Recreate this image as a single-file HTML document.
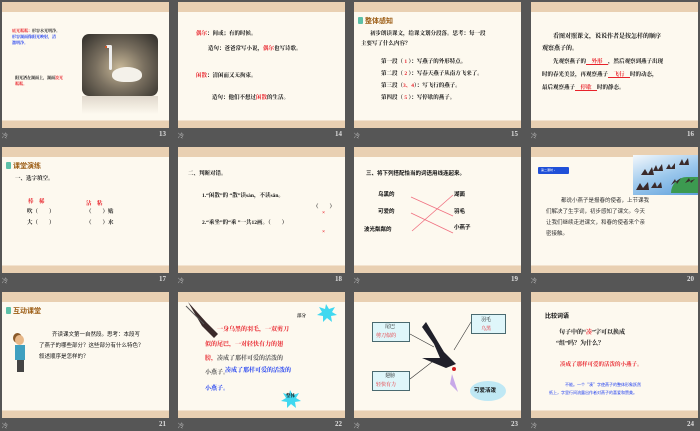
<!DOCTYPE html>
<html><head><meta charset="utf-8"><style>
*{margin:0;padding:0;box-sizing:border-box}
body{width:700px;height:431px;background:#565656;position:relative;overflow:hidden;font-family:"Liberation Sans","Noto Sans CJK SC",sans-serif}
.s{position:absolute;width:167px;height:126px;background:#fdf9ef;overflow:hidden}
.s:before{content:"";position:absolute;left:0;top:0;width:100%;height:10px;background:#e9d0b2}
.s:after{content:"";position:absolute;left:0;bottom:0;width:100%;height:7px;background:#e9d0b2;border-top:1px solid #f3e3cf}
.t{position:absolute;font-size:5.5px;line-height:1;white-space:nowrap;color:#111;font-family:"Liberation Serif","Noto Serif CJK SC",serif;font-weight:bold}
.r{color:#e8222a}.b{color:#1c3cf0}
.n{position:absolute;font-size:7px;color:#ddd;font-weight:bold;font-family:"Liberation Serif",serif}
.i{position:absolute;font-size:6px;color:#bbb}
.hd{position:absolute;font-size:7px;font-weight:bold;color:#9a5a10;white-space:nowrap;font-family:"Noto Sans CJK SC",sans-serif}
.ic{position:absolute;width:5px;height:7px;background:#5cc0a8;border-radius:1px}
</style></head><body>

<!-- row 1 -->
<div class="s" style="left:2px;top:2px">
 <div class="t r" style="left:10px;top:27px;font-size:4px">底光粼粼：<span style="color:#222">形容水光明净。</span></div>
 <div class="t b" style="left:10px;top:33px;font-size:4px">形容湖面像阳光映射，清</div>
 <div class="t b" style="left:10px;top:39px;font-size:4px">澈明净。</div>
 <div class="t" style="left:13px;top:74px;font-size:4px">阳光洒在湖面上，湖面<span class="r">波光</span></div>
 <div class="t r" style="left:13px;top:80px;font-size:4px">粼粼。</div>
 <div style="position:absolute;left:80px;top:32px;width:76px;height:62px;border-radius:7px;background:radial-gradient(ellipse at 50% 55%,#c8b898,#7a7060 45%,#2e2c28)"></div>
 <div style="position:absolute;left:110px;top:65px;width:30px;height:15px;border-radius:50% 50% 40% 40%;background:#f4f1ea"></div>
 <div style="position:absolute;left:107px;top:44px;width:3px;height:24px;background:#eee;border-radius:2px"></div>
 <div style="position:absolute;left:104px;top:43px;width:6px;height:3px;background:#eee;border-radius:2px"></div>
 <div style="position:absolute;left:103px;top:44px;width:2px;height:2px;background:#d05020"></div>
 <div style="position:absolute;left:80px;top:94px;width:76px;height:18px;background:linear-gradient(#e0d8cc,#fdf9ef)"></div>
</div>
<div class="i" style="left:2px;top:131px">冷</div><div class="n" style="left:159px;top:130px">13</div>

<div class="s" style="left:178px;top:2px">
 <div class="t" style="left:18px;top:30px"><span class="r">偶尔</span>：间或；有的时候。</div>
 <div class="t" style="left:30px;top:45px">造句：爸爸常写小说，<span class="r">偶尔</span>也写诗歌。</div>
 <div class="t" style="left:18px;top:72px"><span class="r">闲散</span>：清闲而又无拘束。</div>
 <div class="t" style="left:34px;top:94px">造句：他们不想过<span class="r">闲散</span>的生活。</div>
</div>
<div class="i" style="left:178px;top:131px">冷</div><div class="n" style="left:335px;top:130px">14</div>

<div class="s" style="left:354px;top:2px">
 <div class="ic" style="left:4px;top:15px"></div>
 <div class="hd" style="left:11px;top:14px">整体感知</div>
 <div class="t" style="left:16px;top:30px">初步朗读课文，给课文划分段落。思考：每一段</div>
 <div class="t" style="left:7px;top:40px">主要写了什么内容？</div>
 <div class="t" style="left:27px;top:58px">第一段（ <span class="r">1</span> ）：写燕子的外形特点。</div>
 <div class="t" style="left:27px;top:70px">第二段（ <span class="r">2</span> ）：写春天燕子从南方飞来了。</div>
 <div class="t" style="left:27px;top:82px">第三段（<span class="r">3、4</span>）：写飞行的燕子。</div>
 <div class="t" style="left:27px;top:94px">第四段（ <span class="r">5</span> ）：写停歇的燕子。</div>
</div>
<div class="i" style="left:354px;top:131px">冷</div><div class="n" style="left:511px;top:130px">15</div>

<div class="s" style="left:531px;top:2px">
 <div class="t" style="left:22px;top:32px;font-size:6px">看图对照课文，说说作者是按怎样的顺序</div>
 <div class="t" style="left:11px;top:44px;font-size:6px">观察燕子的。</div>
 <div class="t" style="left:22px;top:58px">先观察燕子的<span class="r" style="text-decoration:underline">　外形　</span>，然后观察到燕子出现</div>
 <div class="t" style="left:11px;top:71px">时的春光美景，再观察燕子<span class="r" style="text-decoration:underline">　飞行　</span>时的动态，</div>
 <div class="t" style="left:11px;top:84px">最后观察燕子<span class="r" style="text-decoration:underline">　停歇　</span>时的静态。</div>
</div>
<div class="i" style="left:531px;top:131px">冷</div><div class="n" style="left:687px;top:130px">16</div>

<!-- row 2 -->
<div class="s" style="left:2px;top:147px">
 <div class="ic" style="left:4px;top:15px"></div>
 <div class="hd" style="left:11px;top:14px">课堂演练</div>
 <div class="t" style="left:13px;top:30px">一、选字填空。</div>
 <div class="t r" style="left:26px;top:53px">棒　稀</div>
 <div class="t r" style="left:84px;top:55px">沾　粘</div>
 <div class="t" style="left:25px;top:63px">吹（　　）</div>
 <div class="t" style="left:84px;top:63px">（　　）贴</div>
 <div class="t" style="left:25px;top:74px">大（　　）</div>
 <div class="t" style="left:84px;top:74px">（　　）水</div>
</div>
<div class="i" style="left:2px;top:276px">冷</div><div class="n" style="left:159px;top:275px">17</div>

<div class="s" style="left:178px;top:147px">
 <div class="t" style="left:10px;top:25px">二、判断对错。</div>
 <div class="t" style="left:24px;top:47px">1.“闲散”的 “散”读sàn，不读sǎn。</div>
 <div class="t" style="left:135px;top:58px">（　　）</div>
 <div class="t r" style="left:144px;top:64px">×</div>
 <div class="t" style="left:24px;top:74px">2.“乘坐”的“乘 ”一共12画。（　　）</div>
 <div class="t r" style="left:144px;top:83px">×</div>
</div>
<div class="i" style="left:178px;top:276px">冷</div><div class="n" style="left:335px;top:275px">18</div>

<div class="s" style="left:354px;top:147px">
 <div class="t" style="left:12px;top:24px;font-family:'Noto Sans CJK SC',sans-serif;font-size:5.5px">三、将下列搭配恰当的词语用线连起来。</div>
 <div class="t" style="left:24px;top:45px;font-family:'Noto Sans CJK SC',sans-serif">乌黑的</div>
 <div class="t" style="left:24px;top:62px;font-family:'Noto Sans CJK SC',sans-serif">可爱的</div>
 <div class="t" style="left:10px;top:80px;font-family:'Noto Sans CJK SC',sans-serif">波光粼粼的</div>
 <div class="t" style="left:100px;top:45px;font-family:'Noto Sans CJK SC',sans-serif">湖面</div>
 <div class="t" style="left:100px;top:62px;font-family:'Noto Sans CJK SC',sans-serif">羽毛</div>
 <div class="t" style="left:100px;top:78px;font-family:'Noto Sans CJK SC',sans-serif">小燕子</div>
 <svg style="position:absolute;left:0;top:0" width="167" height="126"><g stroke="#f07080" stroke-width="0.8"><line x1="57" y1="50" x2="99" y2="69"/><line x1="57" y1="66" x2="99" y2="86"/><line x1="58" y1="84" x2="99" y2="48"/></g></svg>
</div>
<div class="i" style="left:354px;top:276px">冷</div><div class="n" style="left:511px;top:275px">19</div>

<div class="s" style="left:531px;top:147px">
 <div style="position:absolute;left:102px;top:8px;width:65px;height:40px;background:linear-gradient(160deg,#f4f8fc,#9cc8ec 50%,#5fa0dc)"></div>
 <div style="position:absolute;left:140px;top:30px;width:27px;height:16px;background:#3c9a50;border-radius:20px 0 0 0"></div>
 <svg style="position:absolute;left:100px;top:8px" width="67" height="40"><g fill="#3a2a2a"><path d="M10 20l4-6 3 5 4-7 2 8z"/><path d="M22 16l3-6 2 5 4-6 1 7z"/><path d="M35 14l3-5 2 4 4-5v6z"/><path d="M48 10l3-6 2 5 4-6 1 7z"/><path d="M5 35l4-7 3 5 5-6 1 8z"/><path d="M20 33l4-6 2 5 4-5 1 6z"/><path d="M40 30l4-6 2 5 4-6z"/><path d="M54 28l4-5 2 5 4-4z"/></g></svg>
 <div style="position:absolute;left:7px;top:20px;width:31px;height:7px;background:#2050d8;border-radius:1px;color:#fff;font-size:3px;line-height:7px;padding-left:3px">第二课时 ›</div>
 <div class="t" style="left:30px;top:51px;font-family:'Noto Sans CJK SC',sans-serif;font-weight:normal;color:#333">都说小燕子是报春的使者，上节课我</div>
 <div class="t" style="left:15px;top:62px;font-family:'Noto Sans CJK SC',sans-serif;font-weight:normal;color:#333">们解决了生字词，初步感知了课文。今天</div>
 <div class="t" style="left:15px;top:73px;font-family:'Noto Sans CJK SC',sans-serif;font-weight:normal;color:#333">让我们继续走进课文，和春的使者来个亲</div>
 <div class="t" style="left:15px;top:84px;font-family:'Noto Sans CJK SC',sans-serif;font-weight:normal;color:#333">密接触。</div>
</div>
<div class="i" style="left:531px;top:276px">冷</div><div class="n" style="left:687px;top:275px">20</div>

<!-- row 3 -->
<div class="s" style="left:2px;top:292px">
 <div class="ic" style="left:4px;top:15px"></div>
 <div class="hd" style="left:11px;top:14px">互动课堂</div>
 <div style="position:absolute;left:13px;top:43px;width:9px;height:10px;border-radius:50%;background:#e8b888;box-shadow:-2px -2px 0 #8a5a2a"></div>
 <div style="position:absolute;left:13px;top:53px;width:10px;height:15px;background:#3fa0c0"></div>
 <div style="position:absolute;left:15px;top:68px;width:7px;height:12px;background:#444"></div>
 <div class="t" style="left:50px;top:40px;font-family:'Noto Sans CJK SC',sans-serif;font-weight:normal">齐读课文第一自然段。思考：本段写</div>
 <div class="t" style="left:37px;top:51px;font-family:'Noto Sans CJK SC',sans-serif;font-weight:normal">了燕子的哪些部分？这些部分有什么特色？</div>
 <div class="t" style="left:37px;top:62px;font-family:'Noto Sans CJK SC',sans-serif;font-weight:normal">叙述顺序是怎样的？</div>
</div>
<div class="i" style="left:2px;top:421px">冷</div><div class="n" style="left:159px;top:420px">21</div>

<div class="s" style="left:178px;top:292px">
 <svg style="position:absolute;left:0;top:0" width="167" height="126"><path d="M10 10 L28 30 L40 42 L36 46 L24 34z" fill="#3a2a2a"/><path d="M8 14 L26 32" stroke="#555" stroke-width="1"/>
 <path d="M148 12l3 5 6-2-3 5 5 3-6 1 1 6-5-4-4 4v-6l-6-1 5-3-3-5 6 2z" fill="#40d8f0"/>
 <path d="M112 98l3 5 6-2-3 5 5 3-6 1 1 6-5-4-4 4v-6l-6-1 5-3-3-5 6 2z" fill="#40d8f0"/></svg>
 <div class="t" style="left:119px;top:22px;font-size:4.5px">部分</div>
 <div class="t" style="left:108px;top:102px;font-size:4.5px">整体</div>
 <div class="t r" style="left:39px;top:35px;font-size:6px">一身乌黑的羽毛，一双剪刀</div>
 <div class="t r" style="left:27px;top:50px;font-size:6px">似的尾巴，一对轻快有力的翅</div>
 <div class="t" style="left:27px;top:64px;font-size:6px"><span class="r">膀，</span><span style="color:#555">凑成了那样可爱的活泼的</span></div>
 <div class="t b" style="left:47px;top:76px;font-size:6px">凑成了那样可爱的活泼的</div>
 <div class="t" style="left:27px;top:78px;font-size:6px;color:#555">小燕子。</div>
 <div class="t b" style="left:27px;top:94px;font-size:6px">小燕子。</div>
</div>
<div class="i" style="left:178px;top:421px">冷</div><div class="n" style="left:335px;top:420px">22</div>

<div class="s" style="left:354px;top:292px">
 <div style="position:absolute;left:18px;top:30px;width:38px;height:20px;background:#dff6fa;border:1px solid #4a6a70"></div>
 <div class="t" style="left:31px;top:33px;font-weight:normal;font-size:5px">尾巴</div>
 <div class="t r" style="left:22px;top:42px;font-weight:normal;font-size:5px">剪刀似的</div>
 <div style="position:absolute;left:117px;top:22px;width:35px;height:20px;background:#dff6fa;border:1px solid #4a6a70"></div>
 <div class="t" style="left:127px;top:26px;font-weight:normal;font-size:5px">羽毛</div>
 <div class="t r" style="left:127px;top:35px;font-weight:normal;font-size:5px">乌黑</div>
 <div style="position:absolute;left:18px;top:79px;width:38px;height:20px;background:#dff6fa;border:1px solid #4a6a70"></div>
 <div class="t" style="left:31px;top:82px;font-weight:normal;font-size:5px">翅膀</div>
 <div class="t r" style="left:22px;top:91px;font-weight:normal;font-size:5px">轻快有力</div>
 <svg style="position:absolute;left:0;top:0" width="167" height="126"><g stroke="#333" stroke-width="0.6"><line x1="56" y1="42" x2="80" y2="55"/><line x1="56" y1="87" x2="78" y2="70"/><line x1="117" y1="30" x2="100" y2="58"/></g>
 <path d="M72 30 L90 60 L102 72 L92 76 L68 66 L86 66 L80 52 L68 35z" fill="#20202a"/><circle cx="100" cy="77" r="2" fill="#d02020"/><path d="M98 82 L104 100 L96 92z" fill="#c8a8e8"/>
 <ellipse cx="134" cy="99" rx="18" ry="10" fill="#bfe8f4"/></svg>
 <div class="t" style="left:120px;top:96px;font-family:'Noto Sans CJK SC',sans-serif">可爱活泼</div>
</div>
<div class="i" style="left:354px;top:421px">冷</div><div class="n" style="left:511px;top:420px">23</div>

<div class="s" style="left:531px;top:292px">
 <div class="t" style="left:14px;top:21px;font-family:'Noto Sans CJK SC',sans-serif;font-size:6px">比较词语</div>
 <div class="t" style="left:28px;top:38px;font-size:6px">句子中的“<span class="r">凑</span>”字可以换成</div>
 <div class="t" style="left:25px;top:49px;font-size:6px">“组”吗？为什么？</div>
 <div class="t r" style="left:29px;top:71px;font-size:5.5px">凑成了那样可爱的活泼的小燕子。</div>
 <div class="t b" style="left:34px;top:91px;font-size:4px;font-weight:normal;font-family:'Noto Sans CJK SC',sans-serif">不能。一个“凑”字使燕子的整体形象跃然</div>
 <div class="t b" style="left:18px;top:99px;font-size:4px;font-weight:normal;font-family:'Noto Sans CJK SC',sans-serif">纸上，字里行间流露出作者对燕子的喜爱和赞美。</div>
</div>
<div class="i" style="left:531px;top:421px">冷</div><div class="n" style="left:687px;top:420px">24</div>
</body></html>
